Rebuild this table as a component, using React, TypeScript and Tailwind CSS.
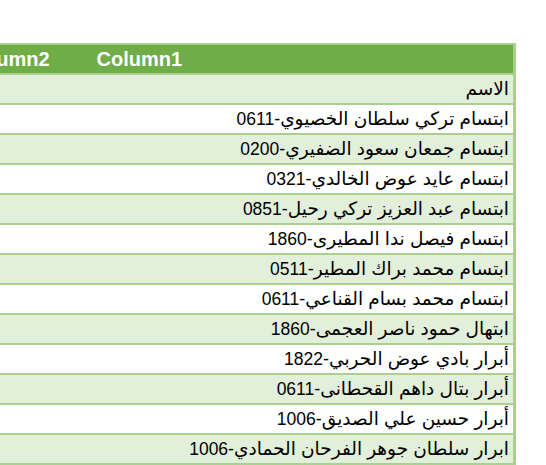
const rows = [
  "الاسم",
  "ابتسام تركي سلطان الخصيوي-0611",
  "ابتسام جمعان سعود الضفيري-0200",
  "ابتسام عايد عوض الخالدي-0321",
  "ابتسام عبد العزيز تركي رحيل-0851",
  "ابتسام فيصل ندا المطيرى-1860",
  "ابتسام محمد براك المطير-0511",
  "ابتسام محمد بسام القناعي-0611",
  "ابتهال حمود ناصر العجمى-1860",
  "أبرار بادي عوض الحربي-1822",
  "أبرار بتال داهم القحطانى-0611",
  "أبرار حسين علي الصديق-1006",
  "ابرار سلطان جوهر الفرحان الحمادي-1006",
];

function Cell({ text }: { text: string }) {
  const [name, num] = text.split("-");
  return (
    <>
      {name}
      {num && (
        <>
          <span className="text-[18px]">-</span>
          <span className="text-[17.5px]">{num}</span>
        </>
      )}
    </>
  );
}

export default function App() {
  return (
    <main
      className="w-[546px] h-[465px] overflow-hidden bg-white pt-[43px]"
      style={{ fontFamily: '"Liberation Sans", "DejaVu Sans", sans-serif' }}
    >
      <div className="w-[516px] border-r-[3px] border-[#a9d08e]">
        {/* header */}
        <div className="h-[32px] bg-[#70ad47] border-y-2 border-[#a9d08e] flex items-center overflow-hidden">
          <div className="flex items-center gap-[14px] ml-[-36px] text-white font-bold text-[20px] leading-none whitespace-nowrap">
            <span>Column2</span>
            <span className="pl-[33px]">Column1</span>
          </div>
        </div>

        {rows.map((name, i) => (
          <div
            key={i}
            dir="rtl"
            className={`h-[30px] flex items-center pr-[4px] pt-[1px] border-b-2 border-[#a9d08e] text-[18.5px] leading-none text-black whitespace-nowrap ${
              i % 2 === 0 ? "bg-[#e2efda]" : "bg-white"
            }`}
          >
            <span>
              <Cell text={name} />
            </span>
          </div>
        ))}
      </div>
    </main>
  );
}
